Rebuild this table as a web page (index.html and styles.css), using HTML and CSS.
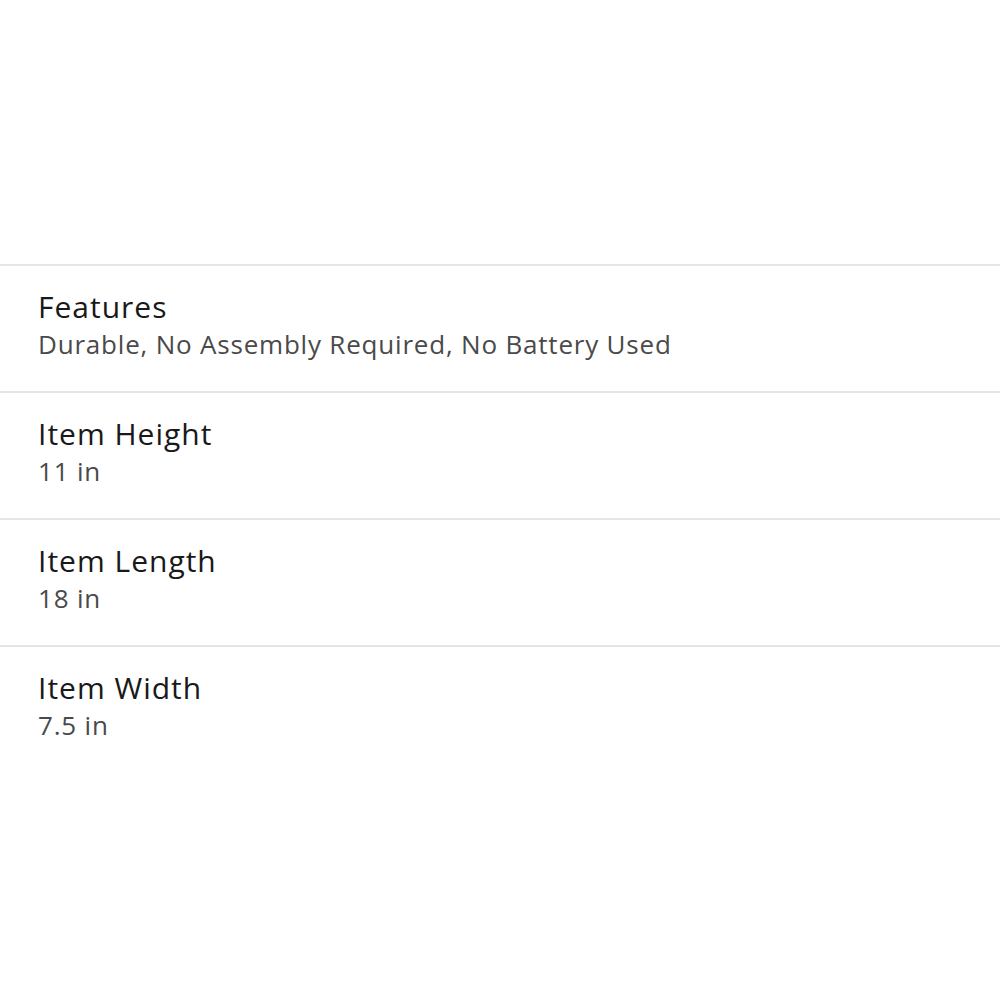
FILE: index.html
```html
<!DOCTYPE html>
<html lang="en">
<head>
    <meta charset="UTF-8">
    <meta name="viewport" content="width=device-width, initial-scale=1.0">
    <title>Item specifics</title>
    <link rel="stylesheet" href="styles.css">
</head>
<body>
    <div class="top-space"></div>
    <ul class="specs">
        <li class="spec">
            <div class="spec-name">Features</div>
            <div class="spec-value">Durable, No Assembly Required, No Battery Used</div>
        </li>
        <li class="spec">
            <div class="spec-name">Item Height</div>
            <div class="spec-value">11 in</div>
        </li>
        <li class="spec">
            <div class="spec-name">Item Length</div>
            <div class="spec-value">18 in</div>
        </li>
        <li class="spec">
            <div class="spec-name">Item Width</div>
            <div class="spec-value">7.5 in</div>
        </li>
    </ul>
</body>
</html>
```

FILE: styles.css
```css
* {
    margin: 0;
    padding: 0;
    box-sizing: border-box;
}

body {
    background-color: #ffffff;
    font-family: 'Open Sans', Roboto, sans-serif;
    width: 1000px;
    min-height: 1000px;
}

.top-space {
    height: 264px;
}

.specs {
    list-style: none;
}

.spec {
    border-top: 2px solid #e5e5e5;
    height: 127px;
    padding: 22px 38px 0;
}

.spec-name {
    font-size: 30px;
    line-height: 38px;
    letter-spacing: 1px;
    color: #191919;
}

.spec-value {
    font-size: 26px;
    line-height: 36px;
    letter-spacing: 0.8px;
    color: #4a4a4a;
}
```
